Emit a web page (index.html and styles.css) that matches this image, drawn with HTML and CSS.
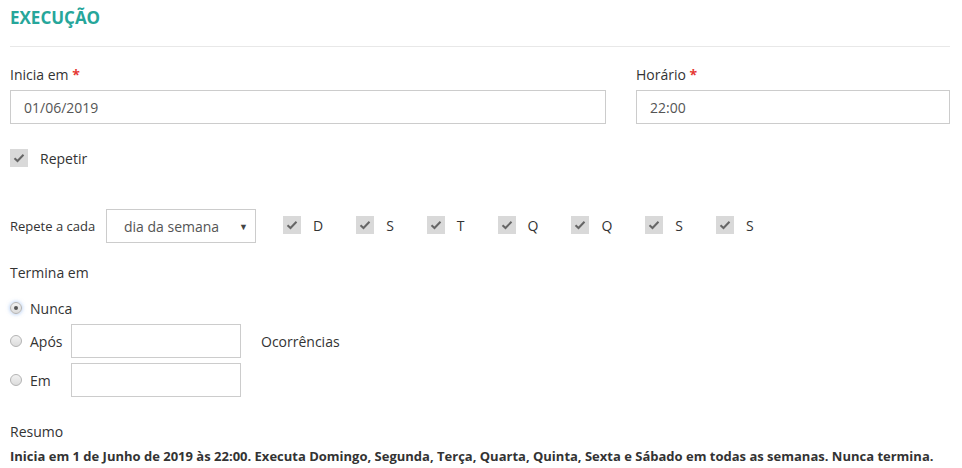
FILE: index.html
```html
<!DOCTYPE html>
<html>

<head>
    <title>Execução</title>
    <link rel="stylesheet" href="styles.css">
</head>

<body>
    <h2 class="section-title">EXECUÇÃO</h2>

    <div class="row-start">
        <div class="field">
            <label class="field-label">Inicia em <span class="required">*</span></label>
            <input type="text" class="text-input" value="01/06/2019">
        </div>
        <div class="field">
            <label class="field-label">Horário <span class="required">*</span></label>
            <input type="text" class="text-input" value="22:00">
        </div>
    </div>

    <div class="check-row repeat">
        <span class="check-box">
            <svg width="12" height="10" viewBox="0 0 12 10"><path d="M1.5 5.2 L4.5 8 L10.5 1.8" fill="none" stroke="#666" stroke-width="2"/></svg>
        </span>
        <span class="check-label">Repetir</span>
    </div>

    <div class="repeat-row">
        <span class="small-label">Repete a cada</span>
        <div class="select-box">
            <span>dia da semana</span>
            <span class="select-arrow">▼</span>
        </div>
        <div class="days">
            <div class="day"><span class="check-box"><svg width="12" height="10" viewBox="0 0 12 10"><path d="M1.5 5.2 L4.5 8 L10.5 1.8" fill="none" stroke="#666" stroke-width="2"/></svg></span>D</div>
            <div class="day"><span class="check-box"><svg width="12" height="10" viewBox="0 0 12 10"><path d="M1.5 5.2 L4.5 8 L10.5 1.8" fill="none" stroke="#666" stroke-width="2"/></svg></span>S</div>
            <div class="day"><span class="check-box"><svg width="12" height="10" viewBox="0 0 12 10"><path d="M1.5 5.2 L4.5 8 L10.5 1.8" fill="none" stroke="#666" stroke-width="2"/></svg></span>T</div>
            <div class="day"><span class="check-box"><svg width="12" height="10" viewBox="0 0 12 10"><path d="M1.5 5.2 L4.5 8 L10.5 1.8" fill="none" stroke="#666" stroke-width="2"/></svg></span>Q</div>
            <div class="day"><span class="check-box"><svg width="12" height="10" viewBox="0 0 12 10"><path d="M1.5 5.2 L4.5 8 L10.5 1.8" fill="none" stroke="#666" stroke-width="2"/></svg></span>Q</div>
            <div class="day"><span class="check-box"><svg width="12" height="10" viewBox="0 0 12 10"><path d="M1.5 5.2 L4.5 8 L10.5 1.8" fill="none" stroke="#666" stroke-width="2"/></svg></span>S</div>
            <div class="day"><span class="check-box"><svg width="12" height="10" viewBox="0 0 12 10"><path d="M1.5 5.2 L4.5 8 L10.5 1.8" fill="none" stroke="#666" stroke-width="2"/></svg></span>S</div>
        </div>
    </div>

    <p class="plain-label ends">Termina em</p>

    <div class="radio-row nunca">
        <span class="radio checked"></span>
        <span class="radio-label">Nunca</span>
    </div>
    <div class="radio-row">
        <span class="radio"></span>
        <span class="radio-label">Após</span>
        <input type="text" class="text-input short">
        <span class="after-text">Ocorrências</span>
    </div>
    <div class="radio-row">
        <span class="radio"></span>
        <span class="radio-label">Em</span>
        <input type="text" class="text-input short">
    </div>

    <p class="plain-label summary-title">Resumo</p>
    <p class="summary">Inicia em 1 de Junho de 2019 às 22:00. Executa Domingo, Segunda, Terça, Quarta, Quinta, Sexta e Sábado em todas as semanas. Nunca termina.</p>
</body>

</html>
```

FILE: styles.css
```css
body {
    margin: 0;
    padding: 0 12px 0 10px;
    font-family: "Open Sans", "Liberation Sans", sans-serif;
    color: #333;
    background-color: #fff;
}

.section-title {
    margin: 6px 0 0 0;
    padding-bottom: 16px;
    font-size: 17px;
    line-height: 24px;
    font-weight: bold;
    color: #26a69a;
    border-bottom: 1px solid #e8e8e8;
}

.row-start {
    display: grid;
    grid-template-columns: 596px 1fr;
    column-gap: 30px;
    margin-top: 18px;
}

.field {
    display: flex;
    flex-direction: column;
}

.field-label {
    font-size: 14px;
    line-height: 20px;
    margin-bottom: 5px;
}

.required {
    color: #e53935;
    font-weight: bold;
}

.text-input {
    box-sizing: border-box;
    height: 34px;
    border: 1px solid #ccc;
    padding: 0 13px;
    font-family: "Open Sans", "Liberation Sans", sans-serif;
    font-size: 14px;
    color: #555;
    outline: none;
}

.check-row {
    display: flex;
    align-items: center;
    margin-top: 25px;
    height: 18px;
}

.check-box {
    width: 18px;
    height: 18px;
    background-color: #d9d9d9;
    display: inline-flex;
    align-items: center;
    justify-content: center;
    flex-shrink: 0;
}

.check-label {
    margin-left: 12px;
    font-size: 14px;
}

.repeat-row {
    display: flex;
    align-items: center;
    margin-top: 42px;
}

.small-label {
    font-size: 13px;
    width: 96px;
}

.select-box {
    box-sizing: border-box;
    width: 150px;
    height: 34px;
    border: 1px solid #ccc;
    display: flex;
    align-items: center;
    justify-content: space-between;
    padding: 0 7px 0 17px;
    font-size: 14px;
    color: #555;
}

.select-arrow {
    font-size: 9px;
    color: #444;
}

.days {
    display: flex;
    gap: 33px;
    margin-left: 27px;
    margin-top: -2px;
}

.day {
    display: flex;
    align-items: center;
    gap: 12px;
    font-size: 14px;
}

.plain-label {
    margin: 0;
    font-size: 14px;
    line-height: 20px;
}

.ends {
    margin-top: 20px;
}

.radio-row {
    display: flex;
    align-items: center;
    margin-top: 5px;
    height: 34px;
}

.radio-row.nunca {
    margin-top: 15px;
    height: 20px;
}

.radio-row.nunca + .radio-row {
    margin-top: 6px;
}

.radio {
    box-sizing: border-box;
    width: 12px;
    height: 12px;
    border-radius: 50%;
    border: 1px solid #b3b3b3;
    background: linear-gradient(#f2f2f2, #dcdcdc);
    display: inline-flex;
    align-items: center;
    justify-content: center;
}

.radio.checked {
    box-shadow: 0 0 4px rgba(80, 140, 230, 0.55);
}

.radio.checked::after {
    content: "";
    width: 4px;
    height: 4px;
    border-radius: 50%;
    background-color: #555;
}

.radio-label {
    margin-left: 8px;
    font-size: 14px;
    width: 41px;
}

.text-input.short {
    width: 170px;
}

.after-text {
    margin-left: 20px;
    font-size: 14px;
}

.summary-title {
    margin-top: 25px;
}

.summary {
    margin: 4px 0 0 0;
    font-size: 13px;
    line-height: 20px;
    font-weight: bold;
    white-space: nowrap;
}
```
